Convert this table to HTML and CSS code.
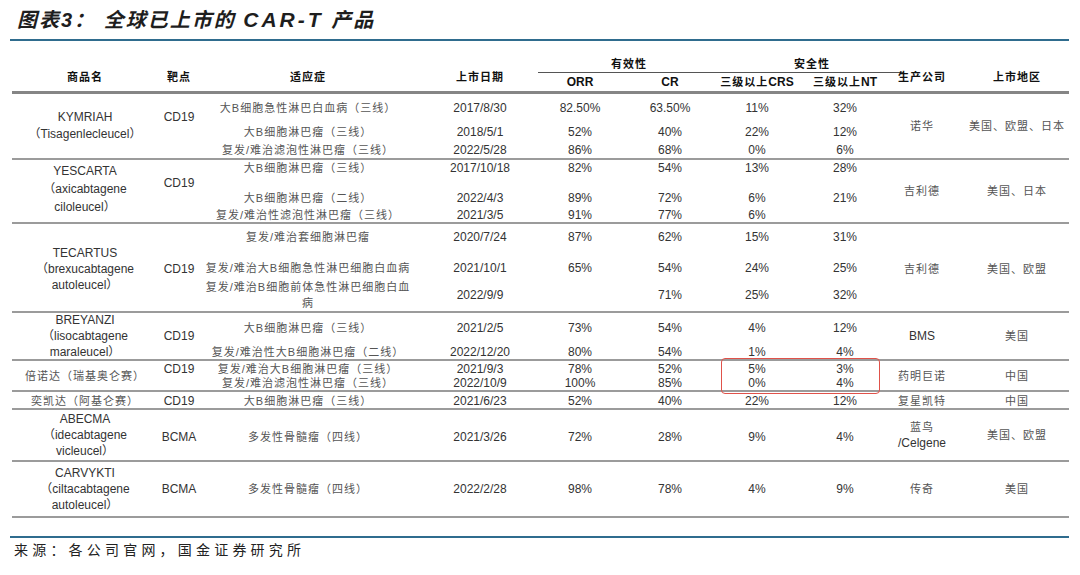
FILE: index.html
```html
<!DOCTYPE html>
<html lang="zh-CN">
<head>
<meta charset="utf-8">
<title>图表3：全球已上市的CAR-T产品</title>
<link rel="stylesheet" href="styles.css">
</head>
<body>
<div class="page">
  <h1 class="title">图表3： 全球已上市的 <span class="lat">CAR-T</span> 产品</h1>
  <div class="rule"></div>

  <div class="table">
    <div class="grid thead">
      <div class="c c1 hspan hz">商品名</div>
      <div class="c c2 hspan hz">靶点</div>
      <div class="c c3 hspan hz">适应症</div>
      <div class="c c4 hspan hz">上市日期</div>
      <div class="grpline"></div>
      <div class="c gh1 hz">有效性</div>
      <div class="c gh2 hz">安全性</div>
      <div class="c c5 hr2 hb">ORR</div>
      <div class="c c6 hr2 hb">CR</div>
      <div class="c c7 hr2 hz"><span>三级以上<b class="hb">CRS</b></span></div>
      <div class="c c8 hr2 hz"><span>三级以上<b class="hb">NT</b></span></div>
      <div class="c c9 hspan hz">生产公司</div>
      <div class="c c10 hspan hz">上市地区</div>
    </div>

    <div class="grid grp g1">
      <div class="c c1 all nm lh17"><span>KYMRIAH</span><span>（Tisagenlecleucel）</span></div>
      <div class="c c2 top2">CD19</div>
      <div class="c c3 r1 zh">大B细胞急性淋巴白血病（三线）</div>
      <div class="c c4 r1">2017/8/30</div>
      <div class="c c5 r1">82.50%</div>
      <div class="c c6 r1">63.50%</div>
      <div class="c c7 r1">11%</div>
      <div class="c c8 r1">32%</div>
      <div class="c c3 r2 zh">大B细胞淋巴瘤（三线）</div>
      <div class="c c4 r2">2018/5/1</div>
      <div class="c c5 r2">52%</div>
      <div class="c c6 r2">40%</div>
      <div class="c c7 r2">22%</div>
      <div class="c c8 r2">12%</div>
      <div class="c c3 r3 zh">复发/难治滤泡性淋巴瘤（三线）</div>
      <div class="c c4 r3">2022/5/28</div>
      <div class="c c5 r3">86%</div>
      <div class="c c6 r3">68%</div>
      <div class="c c7 r3">0%</div>
      <div class="c c8 r3">6%</div>
      <div class="c c9 all zh">诺华</div>
      <div class="c c10 all zh">美国、欧盟、日本</div>
    </div>

    <div class="grid grp g2">
      <div class="c c1 all nm lh18 pb4"><span>YESCARTA</span><span>（axicabtagene</span><span>ciloleucel）</span></div>
      <div class="c c2 top2">CD19</div>
      <div class="c c3 r1 zh">大B细胞淋巴瘤（三线）</div>
      <div class="c c4 r1">2017/10/18</div>
      <div class="c c5 r1">82%</div>
      <div class="c c6 r1">54%</div>
      <div class="c c7 r1">13%</div>
      <div class="c c8 r1">28%</div>
      <div class="c c3 r2 zh">大B细胞淋巴瘤（二线）</div>
      <div class="c c4 r2">2022/4/3</div>
      <div class="c c5 r2">89%</div>
      <div class="c c6 r2">72%</div>
      <div class="c c7 r2">6%</div>
      <div class="c c8 r2">21%</div>
      <div class="c c3 r3 zh">复发/难治性滤泡性淋巴瘤（三线）</div>
      <div class="c c4 r3">2021/3/5</div>
      <div class="c c5 r3">91%</div>
      <div class="c c6 r3">77%</div>
      <div class="c c7 r3">6%</div>
      <div class="c c9 all zh">吉利德</div>
      <div class="c c10 all zh">美国、日本</div>
    </div>

    <div class="grid grp g3">
      <div class="c c1 all nm pt3"><span>TECARTUS</span><span>（brexucabtagene</span><span>autoleucel）</span></div>
      <div class="c c2 all pt3">CD19</div>
      <div class="c c3 r1 zh">复发/难治套细胞淋巴瘤</div>
      <div class="c c4 r1">2020/7/24</div>
      <div class="c c5 r1">87%</div>
      <div class="c c6 r1">62%</div>
      <div class="c c7 r1">15%</div>
      <div class="c c8 r1">31%</div>
      <div class="c c3 r2 zh">复发/难治大B细胞急性淋巴细胞白血病</div>
      <div class="c c4 r2">2021/10/1</div>
      <div class="c c5 r2">65%</div>
      <div class="c c6 r2">54%</div>
      <div class="c c7 r2">24%</div>
      <div class="c c8 r2">25%</div>
      <div class="c c3 r3 zh lh16"><span>复发/难治B细胞前体急性淋巴细胞白血<br>病</span></div>
      <div class="c c4 r3">2022/9/9</div>
      <div class="c c6 r3">71%</div>
      <div class="c c7 r3">25%</div>
      <div class="c c8 r3">32%</div>
      <div class="c c9 all zh pt3">吉利德</div>
      <div class="c c10 all zh pt3">美国、欧盟</div>
    </div>

    <div class="grid grp g4">
      <div class="c c1 all nm"><span>BREYANZI</span><span>（lisocabtagene</span><span>maraleucel）</span></div>
      <div class="c c2 all">CD19</div>
      <div class="c c3 r1 zh">大B细胞淋巴瘤（三线）</div>
      <div class="c c4 r1">2021/2/5</div>
      <div class="c c5 r1">73%</div>
      <div class="c c6 r1">54%</div>
      <div class="c c7 r1">4%</div>
      <div class="c c8 r1">12%</div>
      <div class="c c3 r2 zh">复发/难治性大B细胞淋巴瘤（二线）</div>
      <div class="c c4 r2">2022/12/20</div>
      <div class="c c5 r2">80%</div>
      <div class="c c6 r2">54%</div>
      <div class="c c7 r2">1%</div>
      <div class="c c8 r2">4%</div>
      <div class="c c9 all">BMS</div>
      <div class="c c10 all zh">美国</div>
    </div>

    <div class="grid grp g5">
      <div class="c c1 all zh">倍诺达（瑞基奥仑赛）</div>
      <div class="c c2 r1">CD19</div>
      <div class="c c3 r1 zh">复发/难治大B细胞淋巴瘤（三线）</div>
      <div class="c c4 r1">2021/9/3</div>
      <div class="c c5 r1">78%</div>
      <div class="c c6 r1">52%</div>
      <div class="c c7 r1">5%</div>
      <div class="c c8 r1">3%</div>
      <div class="c c3 r2 zh">复发/难治滤泡性淋巴瘤（三线）</div>
      <div class="c c4 r2">2022/10/9</div>
      <div class="c c5 r2">100%</div>
      <div class="c c6 r2">85%</div>
      <div class="c c7 r2">0%</div>
      <div class="c c8 r2">4%</div>
      <div class="c c9 all zh">药明巨诺</div>
      <div class="c c10 all zh">中国</div>
      <div class="hl"></div>
    </div>

    <div class="grid grp g6">
      <div class="c c1 r1 zh">奕凯达（阿基仑赛）</div>
      <div class="c c2 r1">CD19</div>
      <div class="c c3 r1 zh">大B细胞淋巴瘤（三线）</div>
      <div class="c c4 r1">2021/6/23</div>
      <div class="c c5 r1">52%</div>
      <div class="c c6 r1">40%</div>
      <div class="c c7 r1">22%</div>
      <div class="c c8 r1">12%</div>
      <div class="c c9 r1 zh">复星凯特</div>
      <div class="c c10 r1 zh">中国</div>
    </div>

    <div class="grid grp g7">
      <div class="c c1 all nm"><span>ABECMA</span><span>（idecabtagene</span><span>vicleucel）</span></div>
      <div class="c c2 r1">BCMA</div>
      <div class="c c3 r1 zh">多发性骨髓瘤（四线）</div>
      <div class="c c4 r1">2021/3/26</div>
      <div class="c c5 r1">72%</div>
      <div class="c c6 r1">28%</div>
      <div class="c c7 r1">9%</div>
      <div class="c c8 r1">4%</div>
      <div class="c c9 all nm"><span class="zh">蓝鸟</span><span>/Celgene</span></div>
      <div class="c c10 all zh">美国、欧盟</div>
    </div>

    <div class="grid grp g8">
      <div class="c c1 all nm"><span>CARVYKTI</span><span>（ciltacabtagene</span><span>autoleucel）</span></div>
      <div class="c c2 r1">BCMA</div>
      <div class="c c3 r1 zh">多发性骨髓瘤（四线）</div>
      <div class="c c4 r1">2022/2/28</div>
      <div class="c c5 r1">98%</div>
      <div class="c c6 r1">78%</div>
      <div class="c c7 r1">4%</div>
      <div class="c c8 r1">9%</div>
      <div class="c c9 all zh">传奇</div>
      <div class="c c10 all zh">美国</div>
    </div>
  </div>

  <div class="rule rule2"></div>
  <p class="src">来源：各公司官网，国金证券研究所</p>
</div>
</body>
</html>
```

FILE: styles.css
```css
html, body {
  margin: 0;
  padding: 0;
  background: #ffffff;
}

body {
  font-family: "Liberation Sans", "Noto Sans CJK SC", sans-serif;
  color: #333333;
}

.page {
  width: 1080px;
  height: 575px;
  overflow: hidden;
}

.title {
  margin: 0;
  height: 39px;
  line-height: 39px;
  padding-left: 17px;
  font-size: 20px;
  font-style: italic;
  font-weight: 700;
  letter-spacing: 2px;
  color: #1e1e1e;
  white-space: nowrap;
}

.title .lat {
  font-size: 21px;
  letter-spacing: 3px;
}

.rule {
  height: 2px;
  width: 1059px;
  margin-left: 10px;
  background: #2f6c8e;
}

.rule2 {
  margin-top: 18px;
}

.table {
  width: 1057px;
  margin-left: 12px;
  margin-top: 9px;
}

.grid {
  display: grid;
  grid-template-columns: 146px 42px 216px 128px 72px 108px 66px 110px 44px 125px;
}

.thead {
  grid-template-rows: 23px 18px;
  border-bottom: 3px solid #858585;
}

.grp {
  position: relative;
  border-bottom: 2px solid #9b9b9b;
}

.g1 { grid-template-rows: 7px 14px 10px 14px 4px 14px 1px; }
.g2 { grid-template-rows: 1px 14px 16px 14px 3px 14px 0px; }
.g3 { grid-template-rows: 6px 14px 17px 14px 4px 32px 0px; }
.g4 { grid-template-rows: 8px 14px 10px 14px 0px; }
.g5 { grid-template-rows: 0px 15px 0px 14px 0px; }
.g6 { grid-template-rows: 2px 14px 0px; }
.g7 { grid-template-rows: 20px 14px 16px; }
.g8 { grid-template-rows: 20px 14px 20px; }

.c {
  display: flex;
  flex-direction: column;
  align-items: center;
  justify-content: center;
  text-align: center;
  white-space: nowrap;
  min-width: 0;
  font-size: 12px;
  line-height: 14px;
  color: #333333;
}

.c1 { grid-column: 1; }
.c2 { grid-column: 2; }
.c3 { grid-column: 3; }
.c4 { grid-column: 4; }
.c5 { grid-column: 5; }
.c6 { grid-column: 6; }
.c7 { grid-column: 7; }
.c8 { grid-column: 8; }
.c9 { grid-column: 9; }
.c10 { grid-column: 10; padding-left: 21px; }

.r1 { grid-row: 2; }
.r2 { grid-row: 4; }
.r3 { grid-row: 6; }
.all { grid-row: 1 / -1; }
.top2 { grid-row: 1 / 5; }

.zh {
  font-size: 11px;
  letter-spacing: 1px;
  color: #555555;
}

.nm { line-height: 16px; }
.lh16 { line-height: 16px; }
.lh17 { line-height: 17px; }
.lh18 { line-height: 18px; }
.pb4 { padding-bottom: 4px; }
.pt3 { padding-top: 3px; }

/* header */
.hspan {
  grid-row: 1 / 3;
  justify-content: flex-end;
  padding-bottom: 7px;
}

.hr2 { grid-row: 2; }

.hz {
  font-size: 11px;
  font-weight: 700;
  letter-spacing: 1px;
  color: #111111;
}

.hb {
  font-size: 12px;
  font-weight: 700;
  letter-spacing: 0;
  color: #111111;
}

.gh1 {
  grid-row: 1;
  grid-column: 5 / 7;
  justify-content: flex-end;
  padding-bottom: 2px;
  padding-right: 10px;
}

.gh2 {
  grid-row: 1;
  grid-column: 7 / 9;
  justify-content: flex-end;
  padding-bottom: 2px;
}

.grpline {
  grid-row: 1;
  grid-column: 5 / 9;
  align-self: end;
  height: 1px;
  margin: 0 -4px 0 -6px;
  background: #555555;
}

/* highlight box */
.hl {
  position: absolute;
  left: 709px;
  top: -3px;
  width: 159px;
  height: 36px;
  box-sizing: border-box;
  border: 1.5px solid #e0524a;
  border-radius: 4px;
}

.src {
  margin: 2px 0 0;
  padding-left: 14px;
  font-size: 14px;
  line-height: 20px;
  letter-spacing: 4.2px;
  color: #222222;
  white-space: nowrap;
}
```
